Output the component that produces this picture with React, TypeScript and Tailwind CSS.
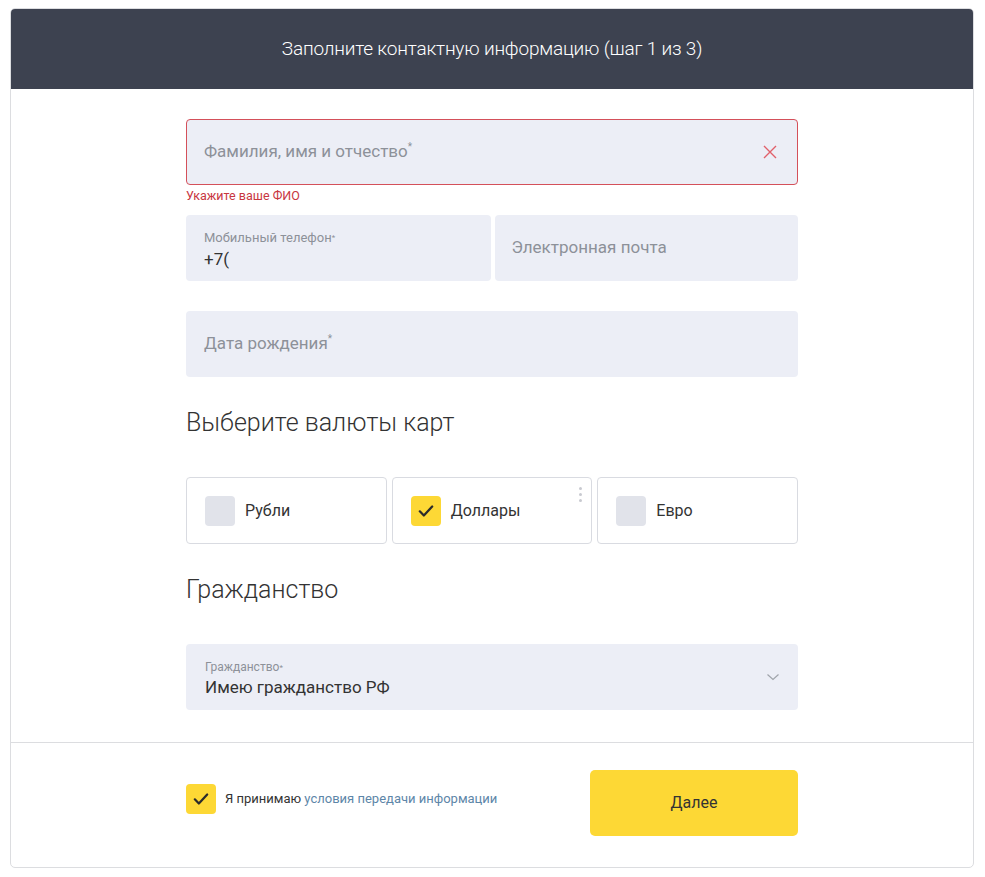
import React, { useState } from 'react';

const font = { fontFamily: 'Roboto, "Liberation Sans", sans-serif' };

const Check: React.FC<{ size?: number }> = ({ size = 18 }) => (
  <svg width={size} height={size} viewBox="0 0 16 16" fill="none">
    <path d="M2.5 8.3l3.6 3.7 7.4-8" stroke="#2b2b2b" strokeWidth="2" strokeLinecap="round" strokeLinejoin="round" />
  </svg>
);

const Box: React.FC<{ checked: boolean }> = ({ checked }) => (
  <div
    className={
      checked
        ? 'w-[30px] h-[30px] rounded-[4px] bg-[#fdd835] flex items-center justify-center flex-shrink-0'
        : 'w-[30px] h-[30px] rounded-[4px] bg-[#e1e3ea] flex-shrink-0'
    }
  >
    {checked && <Check />}
  </div>
);

const CurrencyCard: React.FC<{ label: string; checked: boolean; dots?: boolean }> = ({ label, checked, dots }) => (
  <div className="relative flex-1 h-[67px] border border-[#d9dbe1] rounded-[4px] bg-white flex items-center gap-[10px] pl-[18px]">
    <Box checked={checked} />
    <span className="text-[16px] text-[#333]">{label}</span>
    {dots && (
      <div className="absolute right-[9px] top-[9px] flex flex-col gap-[3px]">
        <span className="w-[3px] h-[3px] rounded-full bg-[#c8cad0]" />
        <span className="w-[3px] h-[3px] rounded-full bg-[#c8cad0]" />
        <span className="w-[3px] h-[3px] rounded-full bg-[#c8cad0]" />
      </div>
    )}
  </div>
);

export default function App() {
  const [agree, setAgree] = useState(true);

  return (
    <div className="min-h-[877px] bg-white pt-[8px] pl-[10px] pr-[11px] pb-[9px]" style={font}>
      <div className="border border-[#dcdde0] rounded-[5px] overflow-hidden">
        <div className="h-[80px] bg-[#3d4250] flex items-center justify-center">
          <h1 className="text-[19px] font-light text-white tracking-[-0.2px]">
            Заполните контактную информацию (шаг 1 из 3)
          </h1>
        </div>

        <div className="w-[612px] mx-auto pt-[30px] pb-[32px]">
          <div className="h-[66px] rounded-[4px] border border-[#d4505a] bg-[#eceef6] flex items-center justify-between pl-[17px] pr-[20px]">
            <span className="text-[17px] text-[#8d9199]">
              Фамилия, имя и отчество<span className="text-[10px] align-top">*</span>
            </span>
            <svg width="14" height="14" viewBox="0 0 14 14">
              <path d="M1 1l12 12M13 1L1 13" stroke="#e0606a" strokeWidth="1.4" />
            </svg>
          </div>
          <div className="h-[30px] pt-[2px] text-[12.5px] text-[#c8363f]">Укажите ваше ФИО</div>

          <div className="flex gap-[4px]">
            <div className="flex-1 h-[66px] rounded-[4px] bg-[#eceef6] flex flex-col justify-center pl-[18px] pt-[4px]">
              <span className="text-[13px] text-[#8d9199] leading-[16px]">
                Мобильный телефон<span className="text-[8px] align-top">*</span>
              </span>
              <span className="text-[17px] text-[#333] leading-[22px] mt-[2px]">+7(</span>
            </div>
            <div className="flex-1 h-[66px] rounded-[4px] bg-[#eceef6] flex items-center pl-[17px]">
              <span className="text-[17px] text-[#8d9199]">Электронная почта</span>
            </div>
          </div>

          <div className="mt-[30px] h-[66px] rounded-[4px] bg-[#eceef6] flex items-center pl-[18px]">
            <span className="text-[17px] text-[#8d9199]">
              Дата рождения<span className="text-[10px] align-top">*</span>
            </span>
          </div>

          <h2 className="mt-[28px] mb-[36px] h-[36px] leading-[36px] text-[25px] font-light text-[#333]">
            Выберите валюты карт
          </h2>

          <div className="flex gap-[5px]">
            <CurrencyCard label="Рубли" checked={false} />
            <CurrencyCard label="Доллары" checked dots />
            <CurrencyCard label="Евро" checked={false} />
          </div>

          <h2 className="mt-[28px] mb-[36px] h-[36px] leading-[36px] text-[25px] font-light text-[#333]">
            Гражданство
          </h2>

          <div className="h-[66px] rounded-[4px] bg-[#eceef6] flex items-center justify-between pl-[19px] pr-[18px]">
            <div className="flex flex-col pt-[5px]">
              <span className="text-[12px] text-[#8d9199] leading-[15px]">
                Гражданство<span className="text-[8px] align-top">*</span>
              </span>
              <span className="text-[17px] text-[#333] leading-[24px]">Имею гражданство РФ</span>
            </div>
            <svg width="14" height="10" viewBox="0 0 14 10">
              <path d="M1.5 2.5l5.5 5 5.5-5" fill="none" stroke="#a0a4ab" strokeWidth="1.2" />
            </svg>
          </div>
        </div>

        <div className="border-t border-[#dcdde0]">
          <div className="w-[612px] mx-auto pt-[27px] pb-[31px] flex items-center justify-between">
            <div className="flex items-center gap-[9px] mb-[8px]" onClick={() => setAgree(!agree)}>
              <Box checked={agree} />
              <span className="text-[13px] text-[#333]">
                Я принимаю <span className="text-[#5d86a8]">условия передачи информации</span>
              </span>
            </div>
            <button className="w-[208px] h-[66px] rounded-[5px] bg-[#fdd835] text-[16px] text-[#333]">
              Далее
            </button>
          </div>
        </div>
      </div>
    </div>
  );
}
